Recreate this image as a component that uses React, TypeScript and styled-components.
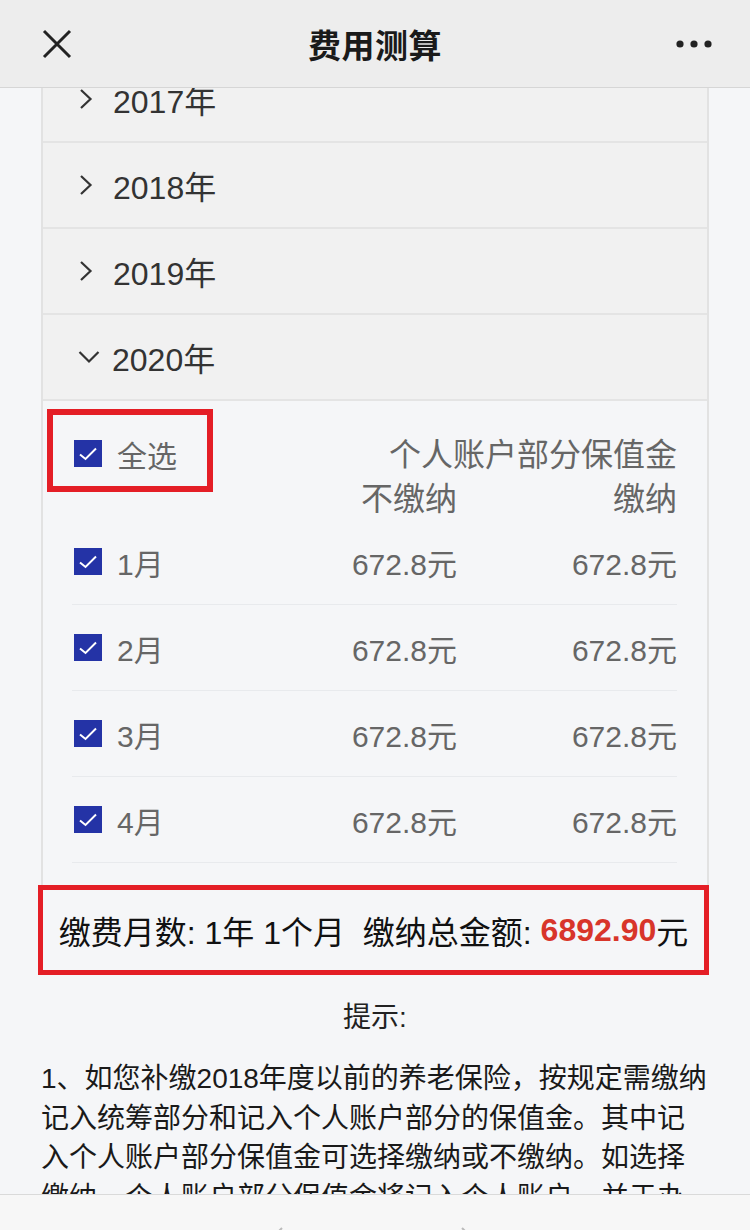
import React from 'react';
import styled, { createGlobalStyle } from 'styled-components';

const GlobalStyle = createGlobalStyle`
	html, body {
		margin: 0;
		padding: 0;
		background: #f5f6f8;
	}
	body {
		height: 1230px;
		overflow: hidden;
		font-family: "Liberation Sans", "Noto Sans CJK SC", sans-serif;
		color: #222;
	}
`;

const Page = styled.div`
	width: 750px;
	height: 1230px;
	display: flex;
	flex-direction: column;
	background: #f5f6f8;
	position: relative;
	overflow: hidden;
`;

const NavBar = styled.header`
	flex: 0 0 88px;
	height: 88px;
	box-sizing: border-box;
	display: grid;
	grid-template-columns: 1fr auto 1fr;
	align-items: center;
	background: #ededed;
	border-bottom: 1px solid #d6d6d6;
	position: relative;
	z-index: 2;
`;

const NavLeft = styled.div`
	padding-left: 42px;
	display: flex;
	align-items: center;
`;

const NavRight = styled.div`
	padding-right: 38px;
	display: flex;
	justify-content: flex-end;
	align-items: center;
`;

const Title = styled.h1`
	margin: 0;
	font-size: 33px;
	font-weight: 700;
	color: #1a1a1a;
	letter-spacing: 0.5px;
`;

const Scroller = styled.main`
	flex: 1;
	overflow: hidden;
`;

const Panel = styled.section`
	margin: -31px 41px 0 41px;
	border-left: 2px solid #e2e2e2;
	border-right: 2px solid #e2e2e2;
	padding-bottom: 22px;
`;

const YearRow = styled.div`
	height: 86px;
	box-sizing: border-box;
	display: flex;
	align-items: center;
	padding-left: 35px;
	background: #f1f1f1;
	border-bottom: 2px solid #e4e4e4;
	font-size: 32px;
	color: #333;
`;

const Chevron = styled.span<{ $open?: boolean }>`
	width: ${(p) => (p.$open ? '24px' : '16px')};
	margin-left: ${(p) => (p.$open ? '-1px' : '0')};
	margin-right: ${(p) => (p.$open ? '11px' : '19px')};
	display: flex;
	align-items: center;
	justify-content: center;
`;

const Expanded = styled.div`
	background: #f5f6f8;
`;

const HeadBlock = styled.div`
	height: 118px;
	box-sizing: border-box;
	padding-top: 8px;
	display: flex;
	align-items: flex-start;
`;

const SelectAll = styled.div`
	margin-left: 4px;
	width: 166px;
	height: 83px;
	box-sizing: border-box;
	border: 6px solid #e41e26;
	display: flex;
	align-items: center;
	padding: 6px 0 0 21px;
	gap: 15px;
	font-size: 30px;
	color: #666;
`;

const HeadCols = styled.div`
	margin-left: auto;
	margin-right: 30px;
	margin-top: 24px;
	display: grid;
	grid-template-columns: auto 220px;
	font-size: 32px;
	line-height: 44px;
	color: #666;
	text-align: right;
`;

const HeadWide = styled.div`
	grid-column: 1 / span 2;
`;

const MonthRow = styled.div`
	margin: 0 30px 0 29px;
	height: 86px;
	box-sizing: border-box;
	border-bottom: 1px solid #e8eaed;
	display: grid;
	grid-template-columns: 1fr auto 220px;
	align-items: center;
	font-size: 30px;
	color: #666;
`;

const MonthLabel = styled.div`
	display: flex;
	align-items: center;
	gap: 15px;
	padding-left: 2px;
`;

const Amount = styled.div`
	text-align: right;
`;

const Box = styled.span`
	width: 28px;
	height: 27px;
	background: #2433a6;
	display: inline-flex;
	align-items: center;
	justify-content: center;
	flex: 0 0 auto;
`;

const Summary = styled.div`
	margin: 0 41px 0 38px;
	height: 90px;
	box-sizing: border-box;
	border: 5px solid #e41e26;
	display: flex;
	align-items: center;
	justify-content: center;
	font-size: 32px;
	color: #111;
	white-space: pre;
`;

const Total = styled.span`
	color: #d8352a;
	font-weight: 700;
`;

const TipTitle = styled.div`
	margin-top: 23px;
	text-align: center;
	font-size: 28px;
	line-height: 40px;
	color: #222;
`;

const TipText = styled.p`
	margin: 21px 0 0 41px;
	width: 668px;
	font-size: 28px;
	line-height: 39.5px;
	color: #1a1a1a;
`;

const ToolBar = styled.footer`
	position: absolute;
	left: 0;
	right: 0;
	bottom: 0;
	height: 35px;
	background: #f7f7f7;
	border-top: 1px solid #dadada;
	overflow: hidden;
	z-index: 2;
`;

const ToolIcon = styled.span<{ $x: number }>`
	position: absolute;
	left: ${(p) => p.$x}px;
	top: 31px;
`;

const CloseIcon = () => (
	<svg width='30' height='30' viewBox='0 0 30 30'>
		<path d='M2 2 L28 28 M28 2 L2 28' stroke='#222' strokeWidth='3' fill='none' />
	</svg>
);

const MoreIcon = () => (
	<svg width='36' height='8' viewBox='0 0 36 8'>
		<circle cx='4' cy='4' r='3.6' fill='#222' />
		<circle cx='18' cy='4' r='3.6' fill='#222' />
		<circle cx='32' cy='4' r='3.6' fill='#222' />
	</svg>
);

const RightArrow = () => (
	<svg width='14' height='22' viewBox='0 0 14 22'>
		<path d='M2 2 L11.5 11 L2 20' stroke='#333' strokeWidth='2.2' fill='none' />
	</svg>
);

const DownArrow = () => (
	<svg width='22' height='14' viewBox='0 0 22 14'>
		<path d='M1.5 2 L11 11.5 L20.5 2' stroke='#333' strokeWidth='2.2' fill='none' />
	</svg>
);

const Check = () => (
	<Box>
		<svg width='20' height='16' viewBox='0 0 20 16'>
			<path d='M2 8.5 L7.5 13 L18 2.5' stroke='#fff' strokeWidth='2' fill='none' />
		</svg>
	</Box>
);

const years = ['2017年', '2018年', '2019年'];
const months = ['1月', '2月', '3月', '4月'];

const App = () => {
	return (
		<Page>
			<GlobalStyle />
			<NavBar>
				<NavLeft>
					<CloseIcon />
				</NavLeft>
				<Title>费用测算</Title>
				<NavRight>
					<MoreIcon />
				</NavRight>
			</NavBar>
			<Scroller>
				<Panel>
					{years.map((y) => (
						<YearRow key={y}>
							<Chevron>
								<RightArrow />
							</Chevron>
							{y}
						</YearRow>
					))}
					<YearRow>
						<Chevron $open>
							<DownArrow />
						</Chevron>
						2020年
					</YearRow>
					<Expanded>
						<HeadBlock>
							<SelectAll>
								<Check />
								全选
							</SelectAll>
							<HeadCols>
								<HeadWide>个人账户部分保值金</HeadWide>
								<div>不缴纳</div>
								<div>缴纳</div>
							</HeadCols>
						</HeadBlock>
						{months.map((m) => (
							<MonthRow key={m}>
								<MonthLabel>
									<Check />
									{m}
								</MonthLabel>
								<Amount>672.8元</Amount>
								<Amount>672.8元</Amount>
							</MonthRow>
						))}
					</Expanded>
				</Panel>
				<Summary>
					缴费月数: 1年 1个月  缴纳总金额: <Total>6892.90</Total>元
				</Summary>
				<TipTitle>提示:</TipTitle>
				<TipText>
					1、如您补缴2018年度以前的养老保险，按规定需缴纳记入统筹部分和记入个人账户部分的保值金。其中记入个人账户部分保值金可选择缴纳或不缴纳。如选择缴纳，个人账户部分保值金将记入个人账户，并于办理退休时计入养老金。
				</TipText>
			</Scroller>
			<ToolBar>
				<ToolIcon $x={270}>
					<svg width='14' height='24' viewBox='0 0 14 24'>
						<path d='M12 2 L2 12 L12 22' stroke='#bbb' strokeWidth='2' fill='none' />
					</svg>
				</ToolIcon>
				<ToolIcon $x={460}>
					<svg width='14' height='24' viewBox='0 0 14 24'>
						<path d='M2 2 L12 12 L2 22' stroke='#bbb' strokeWidth='2' fill='none' />
					</svg>
				</ToolIcon>
			</ToolBar>
		</Page>
	);
};

export default App;
